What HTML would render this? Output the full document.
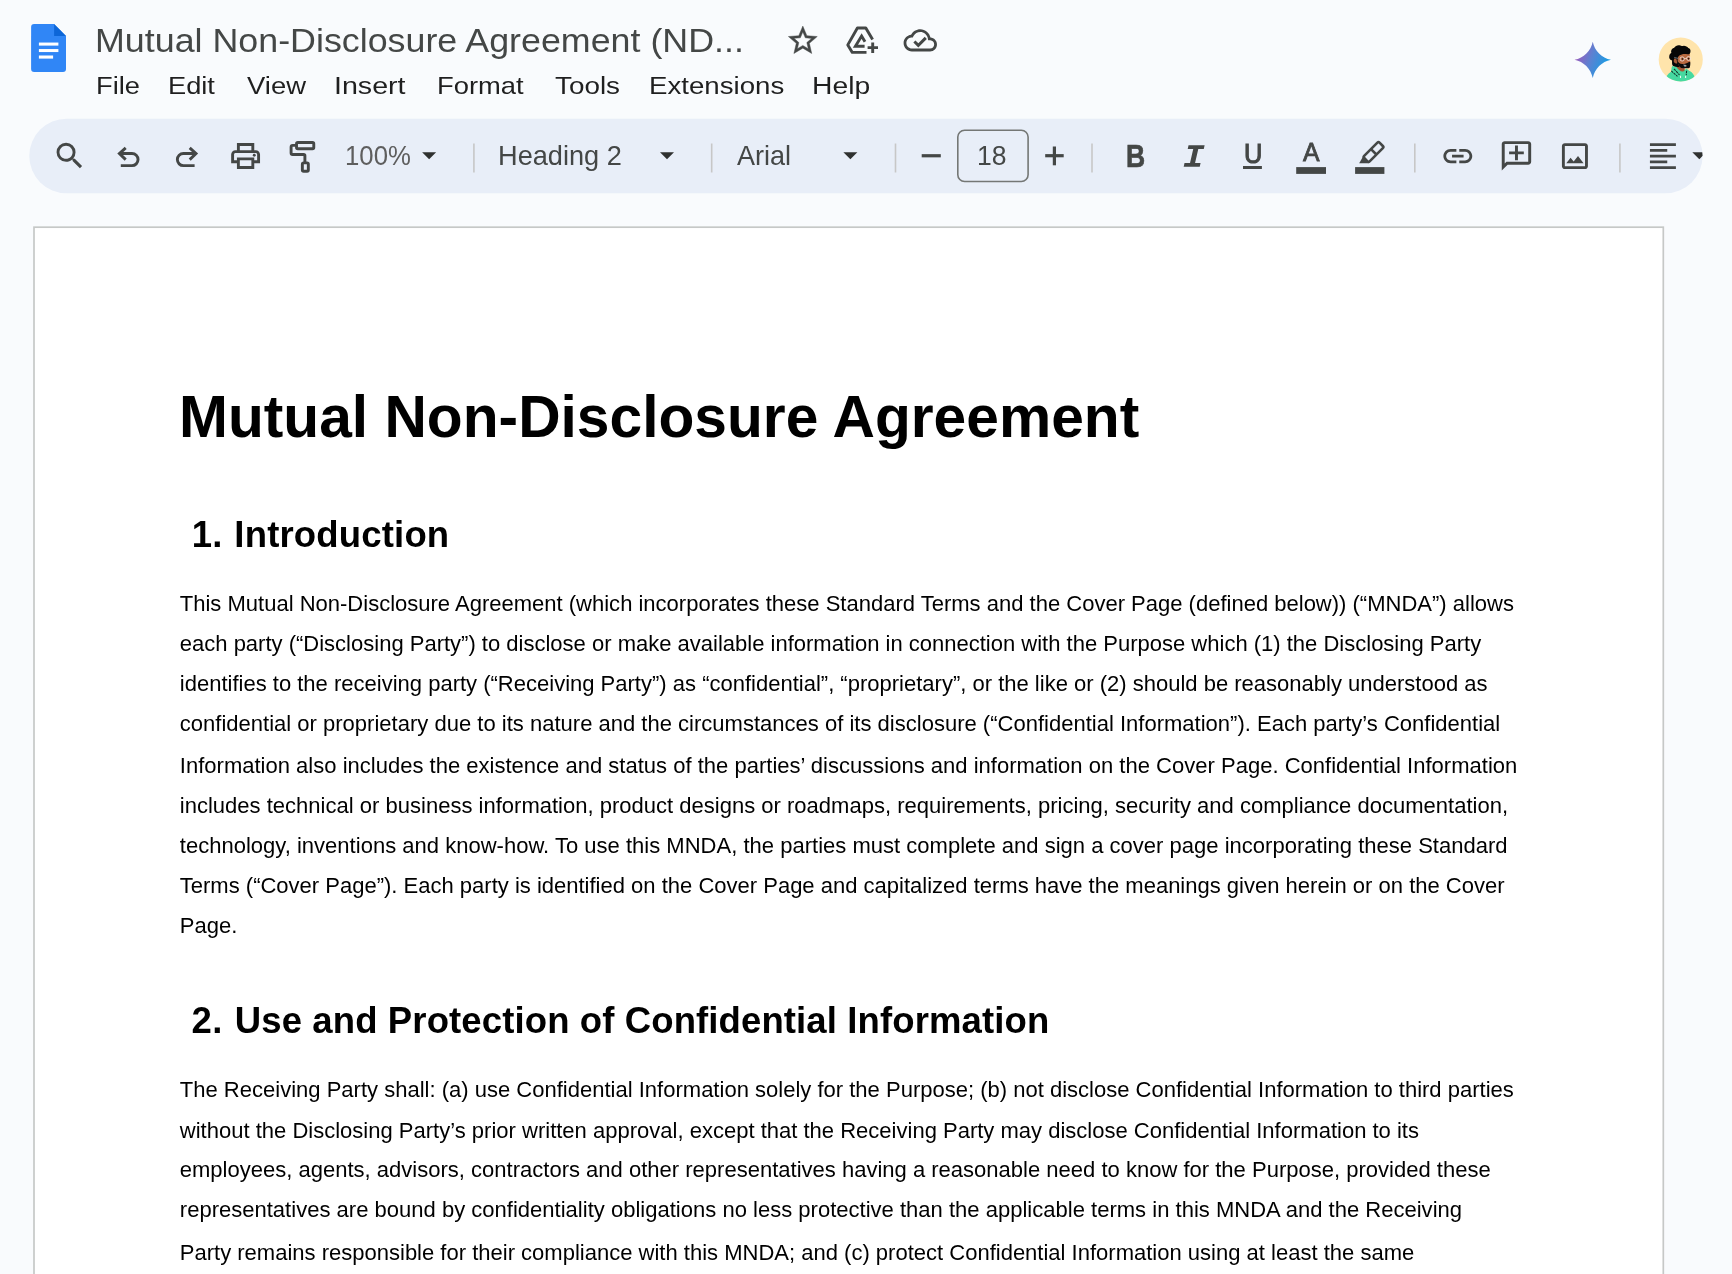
<!DOCTYPE html>
<html lang="en">
<head>
<meta charset="utf-8">
<title>Mutual Non-Disclosure Agreement (NDA)</title>
<style>
html,body{margin:0;padding:0}
body{width:1732px;height:1274px;overflow:hidden;background:#f9fbfd;position:relative;font-family:"Liberation Sans",sans-serif}
.t{position:absolute;white-space:nowrap;line-height:1;transform-origin:0 50%}
#root{position:absolute;left:0;top:0;width:1732px;height:1274px;overflow:hidden;will-change:transform}
svg{position:absolute;left:0;top:0;overflow:visible}
</style>
</head>
<body>
<div id="root">
<svg width="1732" height="1274" viewBox="0 0 1732 1274">
<rect x="29.3" y="118.7" width="1673.3" height="74.6" rx="37.3" fill="#e8eef8"/>
<rect x="34" y="227.2" width="1629.3" height="1100" fill="#fff" stroke="#c6c8c7" stroke-width="1.7"/>
<rect x="957.8" y="130.3" width="70.3" height="51.2" rx="6.8" fill="none" stroke="#747775" stroke-width="1.6"/>
<g fill="#c7c7c7">
<rect x="473.1" y="143.5" width="1.6" height="29"/>
<rect x="710.9" y="143.5" width="1.6" height="29"/>
<rect x="894.7" y="143.5" width="1.6" height="29"/>
<rect x="1091.2" y="143.5" width="1.6" height="29"/>
<rect x="1414" y="143.5" width="1.6" height="29"/>
<rect x="1619.1" y="143.5" width="1.6" height="29"/>
</g>
</svg>

<!-- header text -->
<div class="t" style="left:94.50px;top:24.00px;font-size:33.8px;color:#444746;transform:scaleX(1.0598);">Mutual Non-Disclosure Agreement (ND...</div>
<div class="t" style="left:96.18px;top:73.60px;font-size:24.8px;color:#1f1f1f;transform:scaleX(1.0993);">File</div>
<div class="t" style="left:168.38px;top:73.60px;font-size:24.8px;color:#1f1f1f;transform:scaleX(1.0986);">Edit</div>
<div class="t" style="left:246.72px;top:73.60px;font-size:24.8px;color:#1f1f1f;transform:scaleX(1.1056);">View</div>
<div class="t" style="left:333.91px;top:73.60px;font-size:24.8px;color:#1f1f1f;transform:scaleX(1.1539);">Insert</div>
<div class="t" style="left:436.71px;top:73.60px;font-size:24.8px;color:#1f1f1f;transform:scaleX(1.1040);">Format</div>
<div class="t" style="left:555.48px;top:73.60px;font-size:24.8px;color:#1f1f1f;transform:scaleX(1.1227);">Tools</div>
<div class="t" style="left:648.81px;top:73.60px;font-size:24.8px;color:#1f1f1f;transform:scaleX(1.1152);">Extensions</div>
<div class="t" style="left:811.99px;top:73.60px;font-size:24.8px;color:#1f1f1f;transform:scaleX(1.1399);">Help</div>
<div class="t" style="left:344.61px;top:143.20px;font-size:26.9px;color:#5e5e5e;transform:scaleX(0.9572);">100%</div>
<div class="t" style="left:497.85px;top:143.20px;font-size:26.9px;color:#444746;transform:scaleX(1.0106);">Heading 2</div>
<div class="t" style="left:737.31px;top:143.20px;font-size:26.9px;color:#444746;transform:scaleX(1.0061);">Arial</div>
<div class="t" style="left:976.95px;top:143.20px;font-size:26.9px;color:#444746;transform:scaleX(0.9866);">18</div>
<div class="t" style="left:1125.75px;top:141.00px;font-size:31.2px;color:#444746;font-weight:700;transform:scaleX(0.8520);-webkit-text-stroke:0.6px #444746;">B</div>
<div class="t" style="left:1183.35px;top:144.00px;font-size:29.9px;color:#444746;transform:scaleX(1.1946);-webkit-text-stroke:1.4px #444746;font-family:'Liberation Mono',monospace;font-style:italic;">I</div>
<div class="t" style="left:1243.67px;top:139.00px;font-size:28.2px;color:#444746;transform:scaleX(0.9000);-webkit-text-stroke:1.1px #444746;">U</div>
<div class="t" style="left:1302.87px;top:140.00px;font-size:25.8px;color:#444746;transform:scaleX(0.9611);-webkit-text-stroke:0.8px #444746;">A</div>

<!-- ICONS -->
<svg width="1732" height="200" viewBox="0 0 1732 200">
<defs>
<linearGradient id="gem" x1="0" y1="0.32" x2="1" y2="0.68">
<stop offset="0.02" stop-color="#a058ba"/><stop offset="0.45" stop-color="#5a82d2"/><stop offset="0.95" stop-color="#12a0e6"/>
</linearGradient>
<clipPath id="avclip"><circle cx="1680.75" cy="59.5" r="22.05"/></clipPath>
<clipPath id="tbclip"><rect x="29.3" y="118.7" width="1673.3" height="74.6" rx="37.3"/></clipPath>
</defs>

<!-- docs logo -->
<g id="logo">
<path d="M34.1 23.9 H54.1 L66 35.9 V68.9 a3 3 0 0 1 -3 3 H34.1 a3 3 0 0 1 -3 -3 V26.9 a3 3 0 0 1 3 -3 Z" fill="#3086f6"/>
<path d="M54.1 23.9 L66 35.9 H54.1 Z" fill="#0d66d8"/>
<rect x="38.9" y="42.55" width="19.5" height="3.05" fill="#fff"/>
<rect x="38.9" y="49.05" width="19.5" height="3" fill="#fff"/>
<rect x="38.9" y="55.5" width="14.2" height="3.1" fill="#fff"/>
</g>

<!-- star -->
<g transform="translate(785.5 23.2) scale(1.4433)" fill="#444746" stroke="#444746" stroke-width="0.3">
<path d="M22 9.24l-7.19-.62L12 2 9.19 8.63 2 9.24l5.46 4.73L5.82 21 12 17.27 18.18 21l-1.63-7.03L22 9.24zM12 15.4l-3.76 2.27 1-4.28-3.32-2.88 4.38-.38L12 6.1l1.71 4.04 4.38.38-3.32 2.88 1 4.28L12 15.4z"/>
</g>

<!-- add to drive -->
<g fill="none" stroke="#444746" stroke-width="2.9" stroke-linejoin="round">
<path d="M866.5 52.4 H852.3 L847.8 44.9 L857.4 28 H865.8 L872.6 39.6"/>
<path d="M864.6 46.2 H855.4 L861.6 36 L865 41.8" stroke-linejoin="miter"/>
<path d="M867.6 47.6 H878 M872.7 42.6 V53.1" stroke-linejoin="miter"/>
</g>

<!-- cloud done -->
<g transform="translate(903.6 23.6) scale(1.39)" fill="#444746">
<path d="M19.35 10.04C18.67 6.59 15.64 4 12 4 9.11 4 6.6 5.64 5.35 8.04 2.34 8.36 0 10.91 0 14c0 3.31 2.69 6 6 6h13c2.76 0 5-2.24 5-5 0-2.64-2.05-4.78-4.65-4.96zM19 18H6c-2.21 0-4-1.79-4-4 0-2.05 1.53-3.76 3.56-3.97l1.07-.11.5-.95C8.08 7.14 9.94 6 12 6c2.62 0 4.88 1.86 5.39 4.43l.3 1.5 1.53.11c1.56.1 2.78 1.41 2.78 2.96 0 1.65-1.35 3-3 3z"/>
<path d="M10.6 14.18 L8.51 12.09 L7 13.6 L10.6 17.2 L16.71 10.99 L15.2 9.48 Z"/>
</g>

<!-- gemini spark -->
<g transform="translate(1592.75 59.85) scale(18.2)">
<path d="M0 -1 C0.1 -0.5 0.5 -0.1 1 0 C0.5 0.1 0.1 0.5 0 1 C-0.1 0.5 -0.5 0.1 -1 0 C-0.5 -0.1 -0.1 -0.5 0 -1 Z" fill="url(#gem)"/>
</g>

<!-- avatar -->
<g clip-path="url(#avclip)">
<rect x="1657" y="36" width="48" height="48" fill="#ffe4ab"/>
<g transform="translate(1655 34) scale(0.0408163)">
<!-- hoodie -->
<path d="M230 1200 C240 1080 300 980 400 920 C400 860 405 820 425 785 L520 800 L720 880 L775 850 C800 880 850 900 890 930 C950 980 990 1060 1000 1200 Z" fill="#46d9a0"/>
<!-- neck -->
<path d="M510 760 L720 800 L730 890 C700 930 640 930 600 890 C560 850 520 820 510 760 Z" fill="#a65a36"/>
<!-- hood stripes / strings -->
<path d="M400 905 L550 1040 M465 855 L600 1000 M775 900 L765 1010" stroke="#10352a" stroke-width="26" fill="none" stroke-dasharray="60 18"/>
<path d="M625 1020 V1075 M750 1020 V1075" stroke="#eefaf4" stroke-width="26" fill="none"/>
<!-- hair back -->
<path d="M420 600 L570 600 L610 815 L500 800 L440 775 C420 740 418 690 420 600 Z" fill="#070707"/>
<!-- ear -->
<path d="M445 640 C440 590 500 580 530 610 L545 720 C500 740 455 700 445 640 Z" fill="#a65a36"/>
<!-- face -->
<path d="M545 560 C560 500 640 470 720 480 L850 470 L862 700 L850 800 L600 800 C560 740 540 650 545 560 Z" fill="#b8693f"/>
<!-- beard -->
<path d="M545 650 C570 700 610 740 680 735 C730 730 780 720 820 690 L862 680 C870 740 865 790 845 830 C780 850 700 830 640 830 C590 800 555 740 545 650 Z" fill="#0b0b0b"/>
<path d="M690 745 L770 760 L765 800 L715 795 Z" fill="#9aa3a8"/>
<!-- hair -->
<path d="M440 775 C420 740 420 690 425 650 C370 640 335 590 350 530 C360 490 385 475 400 465 C380 410 410 350 470 335 C500 290 550 265 600 275 C640 290 660 300 690 292 C740 285 790 310 815 345 C860 355 880 400 868 440 C865 470 850 490 830 495 C780 505 720 480 660 500 C600 510 565 545 555 600 L550 660 L520 600 L470 600 L450 680 L500 790 Z" fill="#070707"/>
<!-- glasses -->
<path d="M470 572 L575 600" stroke="#6d7f8c" stroke-width="20" fill="none"/>
<circle cx="665" cy="612" r="52" fill="none" stroke="#f0e4e0" stroke-width="20"/>
<circle cx="822" cy="600" r="48" fill="none" stroke="#f0e4e0" stroke-width="20"/>
<path d="M715 605 L775 598" stroke="#f0e4e0" stroke-width="18" fill="none"/>
<circle cx="676" cy="612" r="20" fill="#120a08"/>
<circle cx="822" cy="606" r="19" fill="#120a08"/>
</g>
</g>

<!-- TOOLBAR ICONS -->
<g fill="#444746">
<!-- search -->
<g transform="translate(52.2 138.4) scale(1.458)">
<path d="M15.5 14h-.79l-.28-.27A6.471 6.471 0 0 0 16 9.5 6.5 6.5 0 1 0 9.5 16c1.61 0 3.09-.59 4.23-1.57l.27.28v.79l5 4.99L20.49 19l-4.99-5zm-6 0C7.01 14 5 11.99 5 9.5S7.01 5 9.5 5 14 7.01 14 9.5 11.99 14 9.5 14z"/>
</g>
<!-- print -->
<g transform="translate(228.28 138.68) scale(1.4433)">
<path d="M19 8h-1V3H6v5H5c-1.66 0-3 1.34-3 3v6h4v4h12v-4h4v-6c0-1.66-1.34-3-3-3zM8 5h8v3H8V5zm8 14H8v-4h8v4zm2-4v-2H6v2H4v-4c0-.55.45-1 1-1h14c.55 0 1 .45 1 1v4h-2z"/>
<circle cx="18" cy="11.5" r="1"/>
</g>
<!-- link -->
<g transform="translate(1440.5 138.8) scale(1.4433)">
<path d="M3.9 12c0-1.71 1.39-3.1 3.1-3.1h4V7H7c-2.76 0-5 2.24-5 5s2.24 5 5 5h4v-1.9H7c-1.71 0-3.1-1.39-3.1-3.1zM8 13h8v-2H8v2zm9-6h-4v1.9h4c1.71 0 3.1 1.39 3.1 3.1s-1.39 3.1-3.1 3.1h-4V17h4c2.76 0 5-2.24 5-5s-2.24-5-5-5z"/>
</g>
<!-- add comment (mirrored) -->
<g transform="translate(1534.1 138.2) scale(-1.47 1.47)">
<path d="M22 4c0-1.1-.9-2-2-2H4c-1.1 0-2 .9-2 2v12c0 1.1.9 2 2 2h14l4 4V4zm-2 13.17L18.83 16H4V4h16v13.17zM13 5h-2v4H7v2h4v4h2v-4h4V9h-4z"/>
</g>
<!-- image -->
<g transform="translate(1557.6 138.8) scale(1.4433)">
<path d="M19 5v14H5V5h14m0-2H5c-1.1 0-2 .9-2 2v14c0 1.1.9 2 2 2h14c1.1 0 2-.9 2-2V5c0-1.1-.9-2-2-2zm-4.86 8.86l-3 3.87L9 13.14 6 17h12l-3.86-5.14z"/>
</g>
<!-- align left -->
<g transform="translate(1645.6 138.8) scale(1.4433)">
<path d="M15 15H3v2h12v-2zm0-8H3v2h12V7zM3 13h18v-2H3v2zm0 8h18v-2H3v2zM3 3v2h18V3H3z"/>
</g>
<!-- dropdown arrows -->
<g fill="#2f3130"><path d="M422.1 152.3 h14 l-7 7 z"/>
<path d="M660 152.3 h14 l-7 7 z"/>
<path d="M843.4 152.3 h14 l-7 7 z"/>
<path d="M1692.3 152.3 h14 l-7 7 z" clip-path="url(#tbclip)"/></g>
<!-- minus / plus -->
<rect x="921.7" y="154.15" width="19.1" height="3.2"/>
<rect x="1045.2" y="154.1" width="18.5" height="3.2"/>
<rect x="1052.8" y="146.5" width="3.2" height="18.8"/>
<!-- colour bars -->
<rect x="1296.2" y="167.1" width="29.8" height="6.8"/>
<rect x="1355.1" y="167.1" width="29.3" height="6.8"/>
</g>

<!-- undo / redo -->
<g fill="none" stroke="#444746" stroke-width="2.9">
<path d="M120.8 165.65 H132 A6.05 6.05 0 0 0 132 153.55 H119.5"/>
<path d="M125.7 147.9 L119.4 153.55 L125.7 159.6"/>
<path d="M194.6 165.65 H183.4 A6.05 6.05 0 0 1 183.4 153.55 H195.9"/>
<path d="M189.7 147.9 L196 153.55 L189.7 159.6"/>
</g>

<!-- paint roller -->
<g fill="none" stroke="#444746" stroke-width="2.9" stroke-linejoin="round">
<rect x="296.52" y="142.49" width="17.26" height="6.33" rx="1.3"/>
<path d="M296.5 145.4 H292.6 a1.5 1.5 0 0 0 -1.5 1.5 V153 a1.5 1.5 0 0 0 1.5 1.5 H303.6 a1.3 1.3 0 0 1 1.3 1.3 V162"/>
<rect x="302.36" y="162.84" width="5.96" height="8.4" rx="1.3"/>
</g>

<!-- highlighter pen -->
<g transform="translate(1373.7 151.8) rotate(-45)" fill="none" stroke="#444746" stroke-width="2.6">
<rect x="-11.1" y="-3.85" width="21.7" height="7.7" rx="1.5"/>
<path d="M0 -3.85 V3.85"/>
</g>
<path d="M1362.6 157.2 L1368.8 163.2 H1359.2 Z" fill="#444746"/>

<!-- underline -->
<rect x="1243" y="166" width="18.9" height="3" fill="#444746"/>
</svg>

<!-- DOCUMENT -->
<div class="t" style="left:179.03px;top:387.00px;font-size:59.2px;color:#000;font-weight:700;transform:scaleX(0.9920);">Mutual Non-Disclosure Agreement</div>
<div class="t" style="left:191.83px;top:517.00px;font-size:36.5px;color:#000;font-weight:700;letter-spacing:0.233px;">1.</div>
<div class="t" style="left:234.35px;top:517.00px;font-size:36.5px;color:#000;font-weight:700;letter-spacing:0.177px;">Introduction</div>
<div class="t" style="left:179.80px;top:593.00px;font-size:22.0px;color:#000;letter-spacing:0.004px;">This Mutual Non-Disclosure Agreement (which incorporates these Standard Terms and the Cover Page (defined below)) (“MNDA”) allows</div>
<div class="t" style="left:179.80px;top:633.00px;font-size:22.0px;color:#000;letter-spacing:0.003px;">each party (“Disclosing Party”) to disclose or make available information in connection with the Purpose which (1) the Disclosing Party</div>
<div class="t" style="left:179.80px;top:673.00px;font-size:22.0px;color:#000;letter-spacing:0.004px;">identifies to the receiving party (“Receiving Party”) as “confidential”, “proprietary”, or the like or (2) should be reasonably understood as</div>
<div class="t" style="left:179.80px;top:713.00px;font-size:22.0px;color:#000;letter-spacing:0.010px;">confidential or proprietary due to its nature and the circumstances of its disclosure (“Confidential Information”). Each party’s Confidential</div>
<div class="t" style="left:179.80px;top:755.00px;font-size:22.0px;color:#000;letter-spacing:0.012px;">Information also includes the existence and status of the parties’ discussions and information on the Cover Page. Confidential Information</div>
<div class="t" style="left:179.80px;top:795.00px;font-size:22.0px;color:#000;letter-spacing:0.011px;">includes technical or business information, product designs or roadmaps, requirements, pricing, security and compliance documentation,</div>
<div class="t" style="left:179.80px;top:835.00px;font-size:22.0px;color:#000;letter-spacing:0.013px;">technology, inventions and know-how. To use this MNDA, the parties must complete and sign a cover page incorporating these Standard</div>
<div class="t" style="left:179.80px;top:875.00px;font-size:22.0px;color:#000;letter-spacing:0.003px;">Terms (“Cover Page”). Each party is identified on the Cover Page and capitalized terms have the meanings given herein or on the Cover</div>
<div class="t" style="left:179.80px;top:915.00px;font-size:22.0px;color:#000;">Page.</div>
<div class="t" style="left:191.51px;top:1003.00px;font-size:36.5px;color:#000;font-weight:700;letter-spacing:0.555px;">2.</div>
<div class="t" style="left:234.79px;top:1003.00px;font-size:36.5px;color:#000;font-weight:700;letter-spacing:0.119px;">Use and Protection of Confidential Information</div>
<div class="t" style="left:179.80px;top:1079.00px;font-size:22.0px;color:#000;letter-spacing:0.008px;">The Receiving Party shall: (a) use Confidential Information solely for the Purpose; (b) not disclose Confidential Information to third parties</div>
<div class="t" style="left:179.80px;top:1120.00px;font-size:22.0px;color:#000;letter-spacing:0.007px;">without the Disclosing Party’s prior written approval, except that the Receiving Party may disclose Confidential Information to its</div>
<div class="t" style="left:179.80px;top:1159.00px;font-size:22.0px;color:#000;letter-spacing:0.008px;">employees, agents, advisors, contractors and other representatives having a reasonable need to know for the Purpose, provided these</div>
<div class="t" style="left:179.80px;top:1199.00px;font-size:22.0px;color:#000;letter-spacing:0.014px;">representatives are bound by confidentiality obligations no less protective than the applicable terms in this MNDA and the Receiving</div>
<div class="t" style="left:179.80px;top:1242.00px;font-size:22.0px;color:#000;letter-spacing:0.005px;">Party remains responsible for their compliance with this MNDA; and (c) protect Confidential Information using at least the same</div>
</div>
</body>
</html>
